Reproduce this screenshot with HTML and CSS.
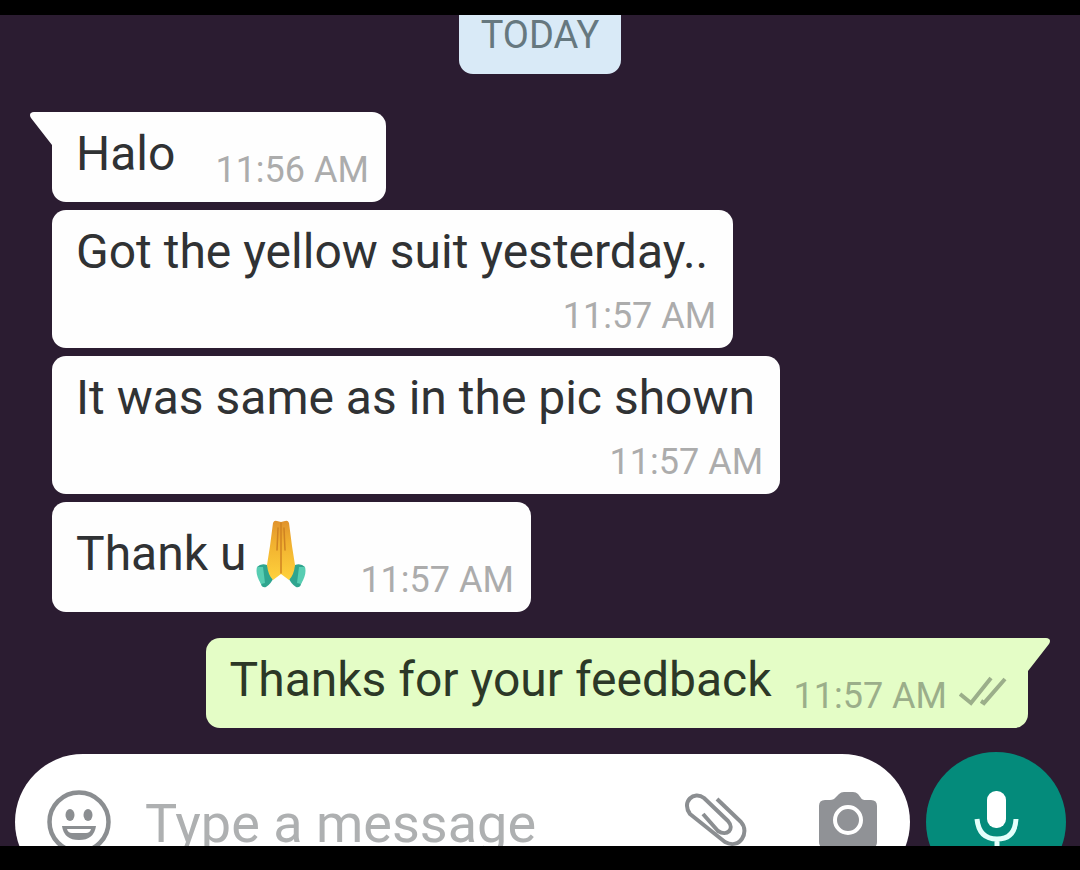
FILE: index.html
```html
<!DOCTYPE html>
<html lang="en">
  <head>
    <title>Chat</title>
    <meta charset="utf-8" />
    <meta name="viewport" content="width=device-width, initial-scale=1" />

    <link rel="stylesheet" href="styles.css">
  </head>

  <body>
    <main class="screen">
      <div class="day">TODAY</div>

      <div class="messages">
        <div class="message">
          <svg class="tail" viewBox="0 0 24 38" aria-hidden="true">
            <path d="M24 0H4C0 0-1 3 1 6L22 33V38H24Z" fill="#fefefe" />
          </svg>
          <div class="text">Halo</div>
          <div class="time">11:56 AM</div>
        </div>

        <div class="message long">
          <div class="text">Got the yellow suit yesterday..</div>
          <div class="time">11:57 AM</div>
        </div>

        <div class="message long">
          <div class="text">It was same as in the pic shown</div>
          <div class="time">11:57 AM</div>
        </div>

        <div class="message">
          <div class="text with-emoji">
            Thank u
            <svg class="emoji" viewBox="0 0 50 68" role="img" aria-label="Folded hands">
              <defs>
                <linearGradient id="skin" x1="0" y1="0" x2="0" y2="1">
                  <stop offset="0" stop-color="#e0922c" />
                  <stop offset="0.35" stop-color="#f0af2f" />
                  <stop offset="1" stop-color="#ffd23c" />
                </linearGradient>
              </defs>
              <path d="M1 47Q5 43 11 45L18 57Q15 64 10 67Q6 68 5 64Z" fill="#2fa58f" />
              <path d="M49 47Q45 43 39 45L32 57Q35 64 40 67Q44 68 45 64Z" fill="#2fa58f" />
              <path d="M1 47Q-1 54 5 64L9 63L7 47Z" fill="#57cdb2" />
              <path d="M49 47Q51 54 45 64L41 63L43 47Z" fill="#57cdb2" />
              <path d="M17 3Q18 0 21 1L25 2L29 1Q32 0 33 3L36 26L39 45Q38 55 33 60L25 54L17 60Q12 55 11 45L14 26Z" fill="url(#skin)" />
              <path d="M25 3V53M22 8L21 30M28 8L29 30" fill="none" stroke="#cf8322" stroke-width="1.5" stroke-linecap="round" />
            </svg>
          </div>
          <div class="time">11:57 AM</div>
        </div>

        <div class="message sent">
          <svg class="tail" viewBox="0 0 24 38" aria-hidden="true">
            <path d="M0 0H20C24 0 25 3 23 6L2 33V38H0Z" fill="#e4fdc6" />
          </svg>
          <div class="text">Thanks for your feedback</div>
          <div class="time">11:57 AM</div>
          <svg class="ticks" viewBox="0 0 48 32" role="img" aria-label="Delivered">
            <path d="M1 18L12 27L32 2M22 25L25 27L46 3" fill="none" stroke="#9bae8a" stroke-width="4" />
          </svg>
        </div>
      </div>

      <form class="composer">
        <div class="field">
          <button class="icon-button" type="button" aria-label="Emoji">
            <svg class="smiley" viewBox="0 0 64 64">
              <circle cx="32" cy="32" r="29.5" fill="none" stroke="#8b8e91" stroke-width="4.5" />
              <ellipse cx="23" cy="25" rx="4.5" ry="6" fill="#8b8e91" />
              <ellipse cx="41" cy="25" rx="4.5" ry="6" fill="#8b8e91" />
              <path d="M15 36H49Q47 50 32 50T15 36Z" fill="#8b8e91" />
              <path d="M20 39H44Q43 43 39 43H25Q21 43 20 39Z" fill="#fff" />
            </svg>
          </button>
          <input class="input" type="text" placeholder="Type a message" aria-label="Type a message" />
          <button class="icon-button" type="button" aria-label="Attach">
            <svg class="clip" viewBox="0 0 64 64">
              <path d="M33 9L57 32C66 42 56 60 41 52L6 24C-3 12 10 0 20 8L44 31C51 39 43 47 34 41L19 24" fill="none" stroke="#8b8e91" stroke-width="4" stroke-linejoin="round" />
            </svg>
          </button>
          <button class="icon-button" type="button" aria-label="Camera">
            <svg class="camera" viewBox="0 0 60 64">
              <path d="M18 7L21 4Q23 2 26 2H35Q38 2 40 4L43 8Q44 10 48 10H53Q59 10 59 16V52Q59 58 53 58H7Q1 58 1 52V16Q1 10 7 10H12Q16 10 18 7Z" fill="#909296" />
              <circle cx="30" cy="30" r="13" fill="#909296" stroke="#fff" stroke-width="4" />
            </svg>
          </button>
        </div>

        <button class="mic" type="button" aria-label="Record voice message">
          <svg class="mic-icon" viewBox="0 0 48 68">
            <rect x="15" y="3" width="19" height="37" rx="9" fill="#fff" />
            <path d="M5 31Q7 51 25 51T44 31M25 51V64" fill="none" stroke="#e4fffb" stroke-width="5" />
          </svg>
        </button>
      </form>
    </main>
  </body>
</html>
```

FILE: styles.css
```css
* {
  box-sizing: border-box;
}

body {
  margin: 0;
  height: 100vh;
  padding: 15px 0 24px;
  background: #000;
  font-family: Roboto, sans-serif;
}

.screen {
  display: flex;
  flex-direction: column;
  height: 100%;
  overflow: hidden;
  background: #2b1c31;
}

.day {
  align-self: center;
  padding: 0 22px 19px;
  border-radius: 0 0 14px 14px;
  background: #d9eaf7;
  color: #66787f;
  font-size: 38px;
  line-height: 40px;
}

.messages {
  display: flex;
  flex-direction: column;
  align-items: flex-start;
  gap: 8px;
  padding: 38px 52px 0;
}

.message {
  position: relative;
  display: flex;
  align-items: flex-end;
  padding: 14px 17px 12px 24px;
  border-radius: 14px;
  background: #fefefe;
}

.message.long {
  flex-direction: column;
  gap: 8px;
}

.message.sent {
  align-self: flex-end;
  margin-top: 18px;
  background: #e4fdc6;
}

.message:first-child {
  border-top-left-radius: 0;
}

.message.sent {
  border-top-right-radius: 0;
}

.text {
  margin: 0 40px 8px 0;
  color: #303234;
  font-size: 48px;
  line-height: 56px;
}

.long .text {
  margin-right: 8px;
}

.sent .text {
  margin-right: 22px;
  color: #2c3827;
}

.with-emoji {
  display: flex;
  gap: 10px;
  margin-right: 54px;
  line-height: 76px;
}

.emoji {
  width: 50px;
  height: 68px;
  margin-top: 4px;
}

.time {
  color: #acacac;
  font-size: 36px;
  line-height: 40px;
}

.sent .time {
  color: #9bae8a;
}

.ticks {
  width: 48px;
  height: 32px;
  margin: 0 4px 8px 12px;
}

.tail {
  position: absolute;
  top: 0;
  left: -22px;
  width: 24px;
  height: 38px;
}

.sent .tail {
  right: -22px;
  left: auto;
}

.composer {
  display: flex;
  flex: none;
  align-items: center;
  gap: 16px;
  margin: 0;
  padding: 24px 14px 0 15px;
}

.field {
  display: flex;
  flex: 1;
  align-items: center;
  min-width: 0;
  height: 136px;
  padding: 0 32px;
  border-radius: 68px;
  background: #fff;
}

.icon-button {
  flex: none;
  padding: 0;
  border: none;
  background: none;
  cursor: pointer;
}

.icon-button svg {
  display: block;
}

.smiley,
.clip {
  width: 64px;
  height: 64px;
}

.camera {
  width: 60px;
  height: 64px;
  margin-left: 70px;
}

.input {
  flex: 1;
  min-width: 0;
  margin: 0 16px 0 34px;
  padding: 4px 0 0;
  border: none;
  outline: none;
  background: none;
  color: #303234;
  font-family: inherit;
  font-size: 54px;
  line-height: 64px;
}

.input::placeholder {
  color: #aeb0b1;
}

.mic {
  flex: none;
  width: 140px;
  height: 140px;
  padding: 0;
  border: none;
  border-radius: 50%;
  background: #048b7b;
  cursor: pointer;
}

.mic-icon {
  display: block;
  width: 48px;
  height: 68px;
  margin: 0 auto;
}
```
